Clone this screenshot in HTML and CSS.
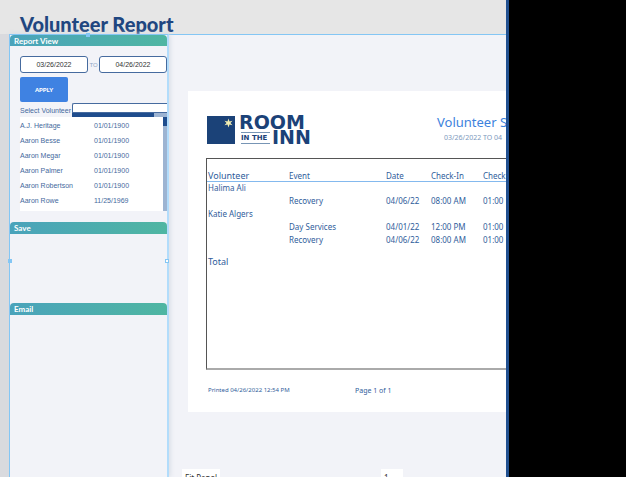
FILE: index.html
```html
<!DOCTYPE html>
<html lang="en">
<head>
<meta charset="utf-8">
<title>Volunteer Report</title>
<link rel="stylesheet" href="styles.css">
</head>
<body>
<div class="app">
  <header class="topbar"><h1>Volunteer Report</h1></header>
  <div class="workspace">
    <aside class="sidebar">
      <section class="panel panel-view">
        <h2 class="panel-title">Report View</h2>
        <form class="filters">
          <div class="dates">
            <input type="text" aria-label="From date" value="03/26/2022">
            <span>TO</span>
            <input type="text" aria-label="To date" value="04/26/2022">
          </div>
          <button class="apply" type="button">APPLY</button>
          <div class="picker">
            <label for="volunteer">Select Volunteer</label>
            <div class="picker-field">
              <input id="volunteer" type="text">
              <div class="hscroll"></div>
            </div>
          </div>
          <div class="list">
            <table>
              <tr><td class="person">A.J. Heritage</td><td>01/01/1900</td></tr>
              <tr><td class="person">Aaron Besse</td><td>01/01/1900</td></tr>
              <tr><td class="person">Aaron Megar</td><td>01/01/1900</td></tr>
              <tr><td class="person">Aaron Palmer</td><td>01/01/1900</td></tr>
              <tr><td class="person">Aaron Robertson</td><td>01/01/1900</td></tr>
              <tr><td class="person">Aaron Rowe</td><td>11/25/1969</td></tr>
            </table>
            <div class="vscroll"></div>
          </div>
        </form>
      </section>
      <section class="panel panel-save"><h2 class="panel-title">Save</h2></section>
      <section class="panel panel-email"><h2 class="panel-title">Email</h2></section>
      <i class="handle handle-top"></i>
      <i class="handle handle-left"></i>
      <i class="handle handle-right"></i>
    </aside>
    <main class="viewer">
      <article class="sheet">
        <div class="sheet-head">
          <svg class="logo" width="112" height="30" viewBox="0 0 112 30" role="img" aria-label="Room in the Inn">
            <rect width="28" height="28" x="1" y="1" fill="#1b4278"/>
            <path d="M22.500 3.500l1 3 3-.8-2 2.300 2 2.300-3-.8-1 3-1-3-3 .8 2-2.300-2-2.300 3 .8z" fill="#f3eeb2"/>
            <text class="logo-big" x="33" y="14">ROOM</text>
            <path d="M35 17.500h29M35 28.500h29" stroke="#7795b5"/>
            <text class="logo-small" x="35" y="25">IN THE</text>
            <text class="logo-big" x="66" y="29">INN</text>
          </svg>
          <div class="sheet-title">
            <h2>Volunteer S</h2>
            <p>03/26/2022 TO 04</p>
          </div>
        </div>
        <div class="report-box">
          <table class="report">
            <colgroup><col class="c-name"><col class="c-event"><col class="c-date"><col class="c-in"><col></colgroup>
            <thead><tr><th class="lead">Volunteer</th><th>Event</th><th>Date</th><th>Check-In</th><th>Check</th></tr></thead>
            <tbody>
              <tr class="group"><td class="lead-cell" colspan="5">Halima Ali</td></tr>
              <tr><td></td><td>Recovery</td><td>04/06/22</td><td>08:00 AM</td><td>01:00</td></tr>
              <tr class="group"><td class="lead-cell" colspan="5">Katie Algers</td></tr>
              <tr><td></td><td>Day Services</td><td>04/01/22</td><td>12:00 PM</td><td>01:00</td></tr>
              <tr class="group"><td></td><td>Recovery</td><td>04/06/22</td><td>08:00 AM</td><td>01:00</td></tr>
              <tr class="total"><td class="lead-cell" colspan="5">Total</td></tr>
            </tbody>
          </table>
        </div>
        <footer class="sheet-foot"><span class="printed">Printed 04/26/2022 12:54 PM</span><span>Page 1 of 1</span></footer>
      </article>
      <div class="viewer-tools">
        <select aria-label="Zoom"><option>Fit Panel</option></select>
        <input type="text" aria-label="Page" value="1">
      </div>
    </main>
  </div>
</div>
</body>
</html>
```
FILE: styles.css
```css
* { box-sizing: border-box; }
body { margin: 0; background: #000; font-family: "Noto Sans", sans-serif; color: #2f5d9b; }
h1, h2, p { margin: 0; }
input, select, button { margin: 0; font-family: inherit; }

.app {
  height: 100vh;
  margin-right: 117px;
  border-right: 3px solid #215090;
  background: #f2f3f8;
  display: flex;
  flex-direction: column;
  overflow: hidden;
}
.topbar { flex: none; height: 34px; padding: 12px 0 0 20px; background: #e6e6e6; }
.topbar h1 { font: 900 20px/24px Lato, sans-serif; color: #1f4680; }
.workspace { flex: 1; min-height: 0; display: flex; border-left: 9px solid #d9dade; }

.sidebar {
  position: relative;
  flex: none;
  width: 160px;
  border: 1px solid #84c6f4;
  border-right: 2px solid #b2dcfb;
  border-bottom: 0;
  font-family: "Liberation Sans", sans-serif;
  box-shadow: 1px 0 5px #d5dae3;
}
.panel-title {
  height: 12px;
  padding-left: 4px;
  border-radius: 4px 4px 0 0;
  background: linear-gradient(90deg, #4aa3bb, #4fb6a2);
  color: #fff;
  font: 700 8px/12px Lato, sans-serif;
}
.panel-view { height: 187px; }
.panel-view .panel-title { height: 11px; }
.panel-save { height: 81px; }
.filters { padding: 10px 0 0 10px; }
.dates { display: flex; align-items: center; font-size: 6px; color: #91a7c5; }
.dates span { flex: 1; text-align: center; }
.dates input {
  width: 68px;
  height: 17px;
  padding: 0;
  border: 1px solid #466b9f;
  border-radius: 3px;
  background: #fff;
  color: #333;
  font-size: 7px;
  text-align: center;
}
.apply {
  display: block;
  width: 48px;
  height: 25px;
  margin-top: 4px;
  padding: 0;
  border: 0;
  border-radius: 2px;
  background: #3f82e2;
  color: #fff;
  font: 900 6px Lato, sans-serif;
}
.picker { display: flex; height: 14px; margin-top: 1px; align-items: flex-end; }
.picker label { width: 52px; font-size: 7px; line-height: 13px; color: #44699d; white-space: nowrap; }
.picker-field { flex: 1; }
.picker-field input {
  display: block;
  width: 100%;
  height: 10px;
  padding: 0;
  border: 1px solid #466b9f;
  border-right: 0;
  border-radius: 2px 0 0 0;
  background: #fff;
}
.hscroll { height: 4px; background: linear-gradient(90deg, #1f4d8d 86%, #9db4d2 86%); }
.list { display: flex; height: 94px; background: #fff; }
.list table { flex: 1; border-collapse: collapse; table-layout: fixed; height: 90px; margin-top: 1px; }
.list td { height: 15px; padding: 0; font-size: 7px; line-height: 15px; color: #44699d; }
.list .person { width: 74px; }
.vscroll { width: 4px; background: linear-gradient(#1f4d8d 9px, #9db4d2 9px); }

.handle { position: absolute; width: 4px; height: 4px; border: 1px solid #84c6f4; background: #fff; }
.handle-top { top: -2px; left: 76px; background: #84c6f4; }
.handle-left { top: 224px; left: -2px; background: #84c6f4; }
.handle-right { top: 224px; right: -2px; }

.viewer { flex: 1; min-width: 0; padding: 56px 0 0 19px; border-top: 1px solid #84c6f4; overflow: hidden; }
.sheet { height: 321px; padding: 24px 0 0 18px; background: #fff; }
.sheet-head { display: flex; justify-content: space-between; height: 43px; }
.sheet-title { width: 69px; white-space: nowrap; text-align: left; }
.sheet-title h2 { font-size: 13px; font-weight: 400; line-height: 14px; color: #3c82dd; }
.sheet-title p { padding-left: 7px; font-size: 7px; line-height: 17px; color: #7d99bd; }
.logo { overflow: visible; }
.logo-big { font: 700 19px "DejaVu Sans", sans-serif; fill: #1b4278; }
.logo-small { font: 700 7px "DejaVu Sans", sans-serif; fill: #1b4278; }

.report-box { height: 212px; border: 1px solid #555; border-bottom: 2px solid #aaa; border-right: 0; }
.report { width: 100%; border-collapse: collapse; table-layout: fixed; font-size: 8px; }
.c-name { width: 82px; }
.c-event { width: 97px; }
.c-date { width: 45px; }
.c-in { width: 52px; }
.report th { height: 22px; padding: 0; border-bottom: 1px solid #84b9ee; font-weight: 400; line-height: 11px; text-align: left; vertical-align: bottom; white-space: nowrap; }
.report td { height: 14px; padding: 0; line-height: 12px; white-space: nowrap; }
.report .lead { padding-left: 1px; font-size: 9px; }
.report .lead-cell { padding-left: 1px; }
.report .group td { height: 12px; }
.report .total td { height: 33px; font-size: 9px; }
.sheet-foot { display: flex; height: 40px; padding-left: 2px; align-items: center; font-size: 7px; }
.printed { width: 147px; font-size: 6px; }

.viewer-tools { display: flex; margin-left: -6px; padding-top: 57px; }
.viewer-tools select { width: 38px; height: 17px; margin-right: 161px; padding: 0 3px; border: 0; appearance: none; background: #fff; color: #333; font-size: 8px; }
.viewer-tools input { width: 22px; height: 17px; padding: 0 3px; border: 0; background: #fff; color: #333; font-size: 8px; }
```
